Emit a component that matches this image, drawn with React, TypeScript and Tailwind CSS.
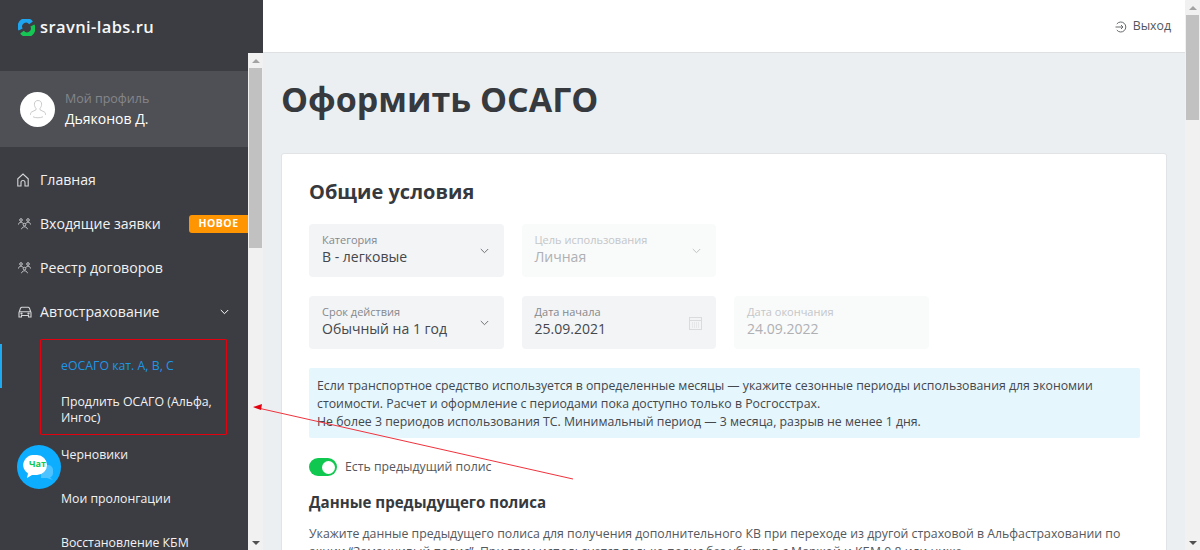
import React from "react";

const font = { fontFamily: '"Open Sans", "Noto Sans", sans-serif' };

function Chevron({ className = "" }: { className?: string }) {
  return (
    <svg width="9" height="6" viewBox="0 0 9 6" fill="none" className={className}>
      <path d="M.8 1l3.700 3.700L8.200 1" stroke="currentColor" strokeWidth="1" />
    </svg>
  );
}

function HomeIcon() {
  return (
    <svg width="12" height="14" viewBox="0 0 12 14" fill="none" stroke="#d5d6d8" strokeWidth="1.1">
      <path d="M.8 13V5.800L6 1l5.200 4.800V13H8V9.500a2 2 0 0 0-4 0V13z" />
    </svg>
  );
}

function PeopleIcon() {
  return (
    <svg width="13" height="12" viewBox="0 0 13 12" fill="none" stroke="#d5d6d8" strokeWidth="0.9">
      <circle cx="3" cy="2" r="1.300" />
      <circle cx="10" cy="2" r="1.300" />
      <circle cx="6.500" cy="6.600" r="1.300" />
      <path d="M.5 6.500c.2-1.500 1.200-2.300 2.500-2.300S5 5 5.200 5.800M12.500 6.500c-.2-1.500-1.200-2.300-2.500-2.300S8 5 7.800 5.800M3.500 11.200c.4-1.500 1.500-2.400 3-2.400s2.600.9 3 2.400" />
    </svg>
  );
}

function CarIcon() {
  return (
    <svg width="14" height="12" viewBox="0 0 14 12" fill="none" stroke="#d5d6d8" strokeWidth="1.1">
      <path d="M1 11V6.500l1.500-4.200C2.700 1.700 3.200 1.200 4 1.200h6c.8 0 1.300.5 1.500 1.100L13 6.500V11h-2.500V9.500h-7V11zM1.500 5.800h11" />
      <circle cx="3.500" cy="7.600" r=".6" />
      <circle cx="10.500" cy="7.600" r=".6" />
    </svg>
  );
}

function NavItem({ icon, label, badge, chevron, iconLeft }: { icon: React.ReactNode; label: string; badge?: boolean; chevron?: boolean; iconLeft: string }) {
  return (
    <div className="flex h-11 items-center text-[14.100px] text-[#f2f2f3]">
      <div className={`flex w-[40px] ${iconLeft}`}>{icon}</div>
      <span>{label}</span>
      {badge && (
        <span className="ml-auto flex h-[18px] w-[59px] items-center justify-center rounded-l-[3px] bg-[#ff9500] text-[10.500px] font-bold tracking-[0.5px] text-white">
          НОВОЕ
        </span>
      )}
      {chevron && <Chevron className="ml-auto mr-[19px] text-white" />}
    </div>
  );
}

function SubItem({ label, blue }: { label: string; blue?: boolean }) {
  return (
    <div className={`pl-[61px] pr-5 text-[12.300px] leading-[16px] ${blue ? "text-[#1e96e6]" : "text-[#f2f2f3]"}`}>{label}</div>
  );
}

function Field({ label, value, disabled, icon }: { label: string; value: string; disabled?: boolean; icon?: "chevron" | "calendar" }) {
  return (
    <div className={`relative h-[53px] w-[194.500px] rounded-[4px] pl-[13px] pt-[8px] ${disabled ? "bg-[#f9fafa]" : "bg-[#f3f4f6]"}`}>
      <div className={`text-[11px] leading-[15px] ${disabled ? "text-[#c4c6c8]" : "text-[#85888c]"}`}>{label}</div>
      <div className={`text-[14px] leading-[20px] ${disabled ? "text-[#aeb0b3]" : "text-[#44474b]"}`}>{value}</div>
      {icon === "chevron" && (
        <Chevron className={`absolute right-[15px] top-[24px] ${disabled ? "text-[#c0c2c5]" : "text-[#6e7175]"}`} />
      )}
      {icon === "calendar" && (
        <svg width="13" height="14" viewBox="0 0 13 14" fill="none" stroke="#d9dbdd" className="absolute right-[14px] top-[20px]">
          <rect x=".5" y="1.500" width="12" height="12" />
          <path d="M.5 4.500h12" />
          <path d="M3 7h7M3 9h7M3 11h7" strokeDasharray="1 1" />
        </svg>
      )}
    </div>
  );
}

function Scrollbar({ thumbHeight }: { thumbHeight: number }) {
  return (
    <div className="flex w-[15px] shrink-0 flex-col items-center bg-[#f1f1f1]">
      <div className="flex h-[15px] shrink-0 items-center justify-center">
        <div className="h-0 w-0 border-x-[4px] border-b-[4px] border-x-transparent border-b-[#a3a3a3]" />
      </div>
      <div className="flex w-full flex-1 flex-col">
        <div className="mx-auto w-[13px] bg-[#c1c1c1]" style={{ height: thumbHeight }} />
      </div>
      <div className="flex h-[15px] shrink-0 items-center justify-center">
        <div className="h-0 w-0 border-x-[4px] border-t-[4px] border-x-transparent border-t-[#505050]" />
      </div>
    </div>
  );
}

export default function App() {
  return (
    <div className="relative flex h-[550px] w-[1200px] overflow-hidden bg-white" style={font}>
      {/* Sidebar */}
      <aside className="flex w-[263px] shrink-0 flex-col bg-[#3c3d42]">
        <div className="flex h-[53px] shrink-0 items-center pl-[18px] pt-[1px]">
          <svg width="17" height="17" viewBox="0 0 17 17" fill="none" strokeWidth="4.600">
            <path d="M2.600 10.500A6.200 6.200 0 0 1 13 3.800" stroke="#1ea5f0" />
            <path d="M14.400 6.500A6.200 6.200 0 0 1 4 13.200" stroke="#16c654" />
          </svg>
          <span className="ml-[5px] text-[16.500px] font-semibold tracking-[0.4px] text-[#f7f7f7]">
            sravni-labs.ru
          </span>
        </div>
        <div className="flex min-h-0 flex-1">
          <div className="w-[248px] shrink-0 overflow-hidden">
            <div className="mt-[18px] flex h-[76px] items-center bg-[#4f5055] pl-[20px]">
              <div className="flex h-[35px] w-[35px] items-center justify-center rounded-full bg-white">
                <svg width="20" height="20" viewBox="0 0 20 20" fill="none" stroke="#c4c4c4" strokeWidth="0.9">
                  <path d="M10 1.500c-2.400 0-3.600 1.600-3.600 3.700 0 1.700.7 3.200 1.600 4.100v1.500l-4.500 2.300c-.8.400-1 1.200-1 2.700M10 1.500c2.400 0 3.600 1.600 3.600 3.700 0 1.700-.7 3.200-1.600 4.100v1.500l4.500 2.300c.8.400 1 1.200 1 2.700" />
                  <path d="M5 17.800c3 1.300 7 1.300 10 0" />
                </svg>
              </div>
              <div className="ml-[10px]">
                <div className="text-[12.500px] leading-[18px] text-[#85868a]">Мой профиль</div>
                <div className="mt-[1px] text-[14px] leading-[20px] text-white">Дьяконов Д.</div>
              </div>
            </div>
            <nav className="mt-[11px]">
              <NavItem icon={<HomeIcon />} iconLeft="pl-[17px]" label="Главная" />
              <NavItem icon={<PeopleIcon />} iconLeft="pl-[18px]" label="Входящие заявки" badge />
              <NavItem icon={<PeopleIcon />} iconLeft="pl-[18px]" label="Реестр договоров" />
              <NavItem icon={<CarIcon />} iconLeft="pl-[18px]" label="Автострахование" chevron />
            </nav>
            <div className="relative mt-[10px] flex flex-col">
              <div className="absolute left-0 top-[0px] h-[44px] w-[2px] bg-[#1eaaf1]" />
              <div className="pt-[14px]"><SubItem label="еОСАГО кат. А, В, С" blue /></div>
              <div className="pt-[20px]"><SubItem label="Продлить ОСАГО (Альфа, Ингос)" /></div>
              <div className="pt-[21px]"><SubItem label="Черновики" /></div>
              <div className="pt-[28px]"><SubItem label="Мои пролонгации" /></div>
              <div className="pt-[28px]"><SubItem label="Восстановление КБМ" /></div>
            </div>
          </div>
          <Scrollbar thumbHeight={180} />
        </div>
      </aside>

      {/* Main */}
      <div className="flex min-w-0 flex-1 flex-col">
        <header className="flex h-[53px] shrink-0 items-center justify-end border-b border-[#dde1e4] pr-[14px] pt-[1px] text-[12.300px] text-[#50565c]">
          <div className="flex items-center gap-[6px]">
            <svg width="12" height="12" viewBox="0 0 12 12" fill="none" stroke="#666a6e" strokeWidth="1">
              <path d="M1.800 3A5 5 0 1 1 1.800 9M.5 6h7M6 4l2 2-2 2" />
            </svg>
            <span>Выход</span>
          </div>
        </header>
        <main className="min-h-0 flex-1 overflow-hidden bg-[#ebeff2] pl-[18px] pr-[18px]">
          <h1 className="pt-[23px] text-[34px] font-bold leading-[46px] text-[#36393d]">
            Оформить ОСАГО
          </h1>
          <section className="mt-[31px] h-[600px] rounded-t-[3px] border border-[#e1e4e7] bg-white pl-[27px] pr-[26px] pt-[25px]">
            <h2 className="text-[20px] font-bold leading-[26px] text-[#36393d]">Общие условия</h2>
            <div className="mt-[19px] flex gap-[18px]">
              <Field label="Категория" value="В - легковые" icon="chevron" />
              <Field label="Цель использования" value="Личная" disabled icon="chevron" />
            </div>
            <div className="mt-[19px] flex gap-[18px]">
              <Field label="Срок действия" value="Обычный на 1 год" icon="chevron" />
              <Field label="Дата начала" value="25.09.2021" icon="calendar" />
              <Field label="Дата окончания" value="24.09.2022" disabled />
            </div>
            <div className="mt-[19px] rounded-[2px] bg-[#e6f6fd] px-[8px] pb-[7px] pt-[9px] text-[12.300px] leading-[18px] text-[#44474b]">
              Если транспортное средство используется в определенные месяцы — укажите сезонные периоды использования для экономии стоимости. Расчет и оформление с периодами пока доступно только в Росгосстрах.
              <br />
              Не более 3 периодов использования ТС. Минимальный период — 3 месяца, разрыв не менее 1 дня.
            </div>
            <div className="mt-[20px] flex items-center">
              <div className="flex h-[18px] w-[28px] items-center justify-end rounded-full bg-[#10c84f] pr-[2px]">
                <div className="h-[13px] w-[13px] rounded-full bg-white" />
              </div>
              <span className="ml-[8px] text-[12.300px] text-[#55585c]">Есть предыдущий полис</span>
            </div>
            <h3 className="mt-[15px] text-[15.100px] font-bold leading-[22px] text-[#36393d]">Данные предыдущего полиса</h3>
            <p className="mt-[12px] whitespace-nowrap text-[12.300px] leading-[18px] text-[#55585c]">
              Укажите данные предыдущего полиса для получения дополнительного КВ при переходе из другой страховой в Альфастраховании по
              <br />
              акции “Заманчивый полис”. При этом используется только полис без убытков с Маржой и КБМ 0,8 или ниже.
            </p>
          </section>
        </main>
      </div>
      <Scrollbar thumbHeight={105} />

      {/* Chat bubble */}
      <div className="absolute left-[17px] top-[445px] h-[44px] w-[44px] rounded-full bg-[#0daeff]">
        <svg width="32" height="30" viewBox="0 0 32 30" className="absolute left-[6px] top-[10px]">
          <path d="M18 10h7a5 5 0 0 1 5 5v3a5 5 0 0 1-3 4.500L30 25l-6-2h-6z" fill="#4fc3ff" />
          <path d="M11 0h3a10 10 0 0 1 0 20H9l-5 3 1-4.500A10 10 0 0 1 11 0z" fill="#fff" />
        </svg>
        <span className="absolute left-[12px] top-[12px] text-[9px] font-bold leading-[14px] text-[#10c84f]">Чат</span>
      </div>

      {/* Annotation overlay */}
      <div className="pointer-events-none absolute left-[40px] top-[339px] h-[96px] w-[187px] rounded-[1px] border border-[#e3000f]" />
      <svg className="pointer-events-none absolute left-0 top-0" width="1200" height="550" fill="none">
        <path d="M573 479L258 408" stroke="#f0323c" strokeWidth="1" />
        <path d="M253 407l9-3-1 6z" fill="#e3000f" />
      </svg>
    </div>
  );
}
